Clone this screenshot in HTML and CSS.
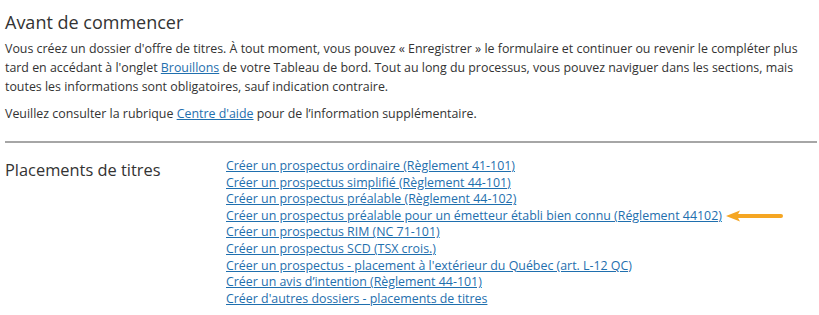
FILE: index.html
```html
<!DOCTYPE html>
<html lang="fr">
<head>
    <meta charset="UTF-8">
    <title>Avant de commencer</title>
    <link rel="stylesheet" href="styles.css">
</head>
<body>
    <div class="intro">
        <h2>Avant de commencer</h2>
        <p>Vous créez un dossier d'offre de titres. À tout moment, vous pouvez « Enregistrer » le formulaire et continuer ou revenir le compléter plus tard en accédant à l'onglet <a href="#">Brouillons</a> de votre Tableau de bord. Tout au long du processus, vous pouvez naviguer dans les sections, mais toutes les informations sont obligatoires, sauf indication contraire.</p>
        <p>Veuillez consulter la rubrique <a href="#">Centre d'aide</a> pour de l’information supplémentaire.</p>
    </div>
    <hr class="divider">
    <div class="section">
        <h3>Placements de titres</h3>
        <ul class="links">
            <li><a href="#">Créer un prospectus ordinaire (Règlement 41-101)</a></li>
            <li><a href="#">Créer un prospectus simplifié (Règlement 44-101)</a></li>
            <li><a href="#">Créer un prospectus préalable (Règlement 44-102)</a></li>
            <li class="flagged">
                <a href="#">Créer un prospectus préalable pour un émetteur établi bien connu (Réglement 44102)</a>
                <svg class="arrow" width="60" height="12" viewBox="0 0 60 12">
                    <path d="M56 6 H12" stroke="#f5a623" stroke-width="4" stroke-linecap="round"/>
                    <path d="M1 6 L15 0.5 L12 6 L15 11.5 Z" fill="#f5a623"/>
                </svg>
            </li>
            <li><a href="#">Créer un prospectus RIM (NC 71-101)</a></li>
            <li><a href="#">Créer un prospectus SCD (TSX crois.)</a></li>
            <li><a href="#">Créer un prospectus - placement à l'extérieur du Québec (art. L-12 QC)</a></li>
            <li><a href="#">Créer un avis d’intention (Règlement 44-101)</a></li>
            <li><a href="#">Créer d'autres dossiers - placements de titres</a></li>
        </ul>
    </div>
</body>
</html>
```

FILE: styles.css
```css
body {
    margin: 0;
    padding: 0 2px 0 5px;
    font-family: "Open Sans", "Liberation Sans", sans-serif;
    color: #333;
    background: #fff;
}
a {
    color: #1f6fae;
    text-decoration: underline;
}
.intro h2 {
    font-size: 18px;
    font-weight: normal;
    margin: 9px 0 4px;
    line-height: 26px;
}
.intro p {
    font-size: 12.4px;
    line-height: 19px;
    margin: 0 0 8px;
    padding-right: 14px;
}
.divider {
    border: 0;
    border-top: 2px solid #a6a6a6;
    margin: 18px 0 0;
}
.section {
    display: flex;
    padding-top: 15px;
}
.section h3 {
    width: 221px;
    margin: 0;
    font-size: 16.4px;
    font-weight: normal;
    line-height: 24px;
}
.links {
    list-style: none;
    margin: 0;
    padding: 0;
    font-size: 12.4px;
    line-height: 16.6px;
}
.flagged {
    display: flex;
    align-items: center;
    gap: 3px;
}
.arrow {
    display: block;
}
```
